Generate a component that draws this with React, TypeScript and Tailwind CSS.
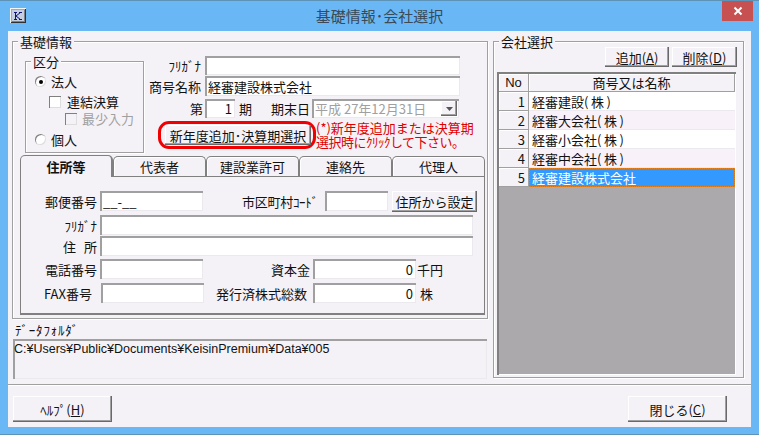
import React from 'react';

const jp = "font-['Noto_Sans_CJK_JP','Noto_Sans_CJK_SC',sans-serif]";
const sunken = 'shadow-[inset_2px_2px_0_#a0a0a0,inset_-1px_-1px_0_#ece9ee] bg-white';
const raised = 'bg-[#f5f2f7] shadow-[inset_-1px_-1px_0_#696969,inset_-2px_-2px_0_#a0a0a0,inset_1px_1px_0_#ffffff]';
const cell = 'bg-[#f5f2f7] border-r border-b border-[#a0a0a0] shadow-[inset_1px_1px_0_#ffffff]';

const Field: React.FC<{ className?: string; text?: string; right?: boolean }> = ({ className = '', text, right }) => (
  <div
    className={`${sunken} ${className} flex items-center overflow-hidden px-[3px] text-[13px] leading-none whitespace-nowrap ${right ? 'justify-end' : ''}`}
  >
    {text}
  </div>
);

const Button: React.FC<{ className?: string; children: React.ReactNode }> = ({ className = '', children }) => (
  <button className={`${raised} ${className} flex items-center justify-center text-[13px] leading-none whitespace-nowrap`}>
    {children}
  </button>
);

const Group: React.FC<{ title: string; className?: string; children: React.ReactNode }> = ({ title, className = '', children }) => (
  <div className={`relative border border-[#a0a0a0] shadow-[inset_1px_1px_0_#ffffff,1px_1px_0_#ffffff] ${className}`}>
    <span className="absolute -top-[8px] left-[5px] bg-[#f5f2f7] px-[2px] text-[13px] leading-[15px]">{title}</span>
    {children}
  </div>
);

const Radio: React.FC<{ on?: boolean }> = ({ on }) => (
  <span className="flex h-[11px] w-[11px] items-center justify-center rounded-full bg-white shadow-[inset_1px_1px_0_#808080,inset_-1px_-1px_0_#dddddd]">
    {on && <span className="h-[4px] w-[4px] rounded-full bg-black" />}
  </span>
);

const Check: React.FC<{ muted?: boolean }> = ({ muted }) => (
  <span className={`block h-[12px] w-[12px] shadow-[inset_1px_1px_0_#808080,inset_-1px_-1px_0_#dddddd] ${muted ? 'bg-[#f5f2f7]' : 'bg-white'}`} />
);

const Label: React.FC<{ className?: string; children: React.ReactNode }> = ({ className = '', children }) => (
  <span className={`shrink-0 text-right text-[13px] leading-none whitespace-nowrap ${className}`}>{children}</span>
);

const tabs = ['住所等', '代表者', '建設業許可', '連絡先', '代理人'];

const companies = ['経審建設', '経審大会社', '経審小会社', '経審中会社', '経審建設株式会社'];

export default function App() {
  return (
    <div className={`${jp} flex h-[435px] w-[759px] flex-col overflow-hidden bg-[#69b8f5] text-[#111] shadow-[inset_0_1px_0_#5e93b8,inset_0_-1px_0_#5e93b8]`}>
      {/* Title bar */}
      <div className="relative flex h-[31px] shrink-0 items-center justify-center">
        <div className="absolute left-[10px] top-[8px] flex h-[15px] w-[16px] items-center justify-center bg-[#c4cfe2] shadow-[inset_1px_1px_0_#f4f4f4,inset_-1px_-1px_0_#303030,inset_2px_2px_0_#a8a8a8,inset_-2px_-2px_0_#808080]">
          <svg width="8" height="8" viewBox="0 0 8 8">
            <path d="M0 .5h3M1.5 .5v7M0 7.5h3M5 .5h3M6.5 .5L2 4l4.5 3.5M5 7.5h3" stroke="#12127a" strokeWidth="1" fill="none" />
          </svg>
        </div>
        <span className="text-[15px] leading-none text-[#3b4a55]">基礎情報･会社選択</span>
        <div className="absolute right-[6px] top-[1px] flex h-[20px] w-[31px] items-center justify-center bg-[#c75050]">
          <svg width="10" height="10" viewBox="0 0 10 10">
            <path d="M1.5 1.5l7 7M8.5 1.5l-7 7" stroke="#fff" strokeWidth="2" />
          </svg>
        </div>
      </div>

      {/* Client area */}
      <div className="mx-[8px] flex h-[396px] flex-col bg-[#f5f2f7] pt-[10px]">
        <div className="flex gap-[5px] pl-[4px]">
          <div className="w-[476px]">
            <Group title="基礎情報" className="h-[278px] w-[476px]">
              <div className="flex h-[113px]">
                {/* 区分 */}
                <Group title="区分" className="ml-[12px] mt-[19px] h-[92px] w-[119px]">
                  <div className="flex items-center gap-[5px] pl-[9px] pt-[13px] text-[13px] leading-none">
                    <Radio on />
                    法人
                  </div>
                  <div className="flex items-center gap-[6px] pl-[23px] pt-[7px] text-[13px] leading-none">
                    <Check />
                    連結決算
                  </div>
                  <div className="flex items-center gap-[5px] pl-[39px] pt-[4px] text-[13px] leading-none text-[#a0a0a0]">
                    <Check muted />
                    最少入力
                  </div>
                  <div className="flex items-center gap-[5px] pl-[9px] pt-[8px] text-[13px] leading-none">
                    <Radio />
                    個人
                  </div>
                </Group>

                <div className="flex flex-col pt-[14px]">
                  <div className="flex h-[19px] items-center gap-[2px]">
                    <Label className="w-[59px] pr-[2px]">ﾌﾘｶﾞﾅ</Label>
                    <Field className="h-[19px] w-[255px]" />
                  </div>
                  <div className="mt-[1px] flex h-[20px] items-center gap-[2px]">
                    <Label className="w-[59px] pr-[2px]">商号名称</Label>
                    <Field className="h-[20px] w-[255px]" text="経審建設株式会社" />
                  </div>
                  <div className="mt-[3px] flex h-[19px] items-center">
                    <Label className="w-[59px]">第</Label>
                    <Field className="ml-[2px] h-[19px] w-[30px]" text="1" right />
                    <Label className="ml-[4px]">期</Label>
                    <Label className="ml-[19px]">期末日</Label>
                    <div className={`${sunken} ml-[2px] flex h-[19px] w-[147px] items-center justify-between pl-[3px] pr-[2px] text-[13px] leading-none text-[#a0a0a0]`}>
                      平成 27年12月31日
                      <span className={`${raised} flex h-[15px] w-[16px] items-center justify-center`}>
                        <svg width="7" height="4" viewBox="0 0 7 4">
                          <path d="M0 0h7L3.5 4z" fill="#555" />
                        </svg>
                      </span>
                    </div>
                  </div>
                  <div className="mt-[3px] flex items-center">
                    <div className="ml-[14px] rounded-[11px] border-[3px] border-[#f00000] py-[1px] pl-[4px] pr-[2px]">
                      <Button className="h-[20px] w-[146px]">新年度追加･決算期選択</Button>
                    </div>
                    <p className="text-[13px] leading-[14px] whitespace-nowrap text-[#e00000]">
                      (*)新年度追加または決算期
                      <br />
                      <span className="tracking-[-0.5px]">選択時にｸﾘｯｸして下さい。</span>
                    </p>
                  </div>
                </div>
              </div>

              {/* Tabs */}
              <div className="ml-[7px] flex h-[21px] w-[465px] items-end">
                {tabs.map((tab, i) => (
                  <div
                    key={tab}
                    className={`flex w-[93px] items-center justify-center rounded-t-[5px] border-l border-t border-[#808080] bg-[#f5f2f7] text-[13px] leading-none ${
                      i === 0
                        ? 'z-10 -mb-px h-[22px] border-r-[2px] font-bold'
                        : 'h-[20px] border-r shadow-[inset_1px_1px_0_#ffffff]'
                    }`}
                  >
                    {tab}
                  </div>
                ))}
              </div>
              <div className="ml-[7px] h-[139px] w-[465px] border border-b-[2px] border-[#808080] pt-[14px]">
                <div className="flex h-[20px] items-center">
                  <Label className="w-[76px]">郵便番号</Label>
                  <Field className="ml-[3px] h-[20px] w-[103px]" text="__-__" />
                  <Label className="w-[122px] pr-[7px] tracking-[-0.3px]">市区町村ｺｰﾄﾞ</Label>
                  <Field className="h-[20px] w-[63px]" />
                  <Button className="ml-[4px] h-[21px] w-[85px]">住所から設定</Button>
                </div>
                <div className="mt-[4px] flex h-[20px] items-center">
                  <Label className="w-[76px]">ﾌﾘｶﾞﾅ</Label>
                  <Field className="ml-[3px] h-[20px] w-[373px]" />
                </div>
                <div className="mt-[1px] flex h-[20px] items-center">
                  <Label className="w-[76px]">
                    <span className="mr-[8px]">住</span>所
                  </Label>
                  <Field className="ml-[3px] h-[20px] w-[373px]" />
                </div>
                <div className="mt-[3px] flex h-[20px] items-center">
                  <Label className="w-[76px]">電話番号</Label>
                  <Field className="ml-[3px] h-[20px] w-[103px]" />
                  <Label className="w-[107px]">資本金</Label>
                  <Field className="ml-[3px] h-[20px] w-[103px]" text="0" right />
                  <Label className="ml-[1px]">千円</Label>
                </div>
                <div className="mt-[4px] flex h-[20px] items-center">
                  <Label className="w-[71px]">FAX番号</Label>
                  <Field className="ml-[9px] h-[20px] w-[103px]" />
                  <Label className="w-[103px]">発行済株式総数</Label>
                  <Field className="ml-[6px] h-[20px] w-[103px]" text="0" right />
                  <Label className="ml-[4px]">株</Label>
                </div>
              </div>
            </Group>

            <div className="mt-[3px] pl-[3px] text-[13px] leading-[15px] tracking-[0.8px]">ﾃﾞｰﾀﾌｫﾙﾀﾞ</div>
            <div className={`${sunken} ml-[1px] mt-[2px] h-[40px] w-[474px] !bg-[#f5f2f7] pl-[1px] pt-[3px] font-['Liberation_Sans',sans-serif] text-[12.5px] leading-[14px]`}>
              C:¥Users¥Public¥Documents¥KeisinPremium¥Data¥005
            </div>
          </div>

          {/* 会社選択 */}
          <Group title="会社選択" className="h-[337px] w-[251px]">
            <div className="flex justify-end gap-[3px] pr-[6px] pt-[5px]">
              <Button className="h-[20px] w-[64px]">
                追加(<u>A</u>)
              </Button>
              <Button className="h-[20px] w-[65px]">
                削除(<u>D</u>)
              </Button>
            </div>
            <div className="ml-[3px] mt-[5px] flex h-[303px] w-[239px] flex-col bg-[#aba9ab] p-[1px] pl-[2px] pt-[2px] shadow-[inset_2px_2px_0_#808080,inset_-1px_-1px_0_#ffffff]">
              <div className="flex h-[18px] shrink-0 text-[13px] leading-none">
                <div className={`${cell} flex w-[30px] items-center justify-center font-['Liberation_Sans',sans-serif]`}>No</div>
                <div className={`${cell} flex flex-1 items-center justify-center`}>商号又は名称</div>
              </div>
              {companies.map((name, i) => (
                <div key={name} className="flex h-[19px] shrink-0 text-[13px] leading-none">
                  <div className={`${cell} flex w-[30px] items-center justify-end pr-[3px]`}>{i + 1}</div>
                  <div
                    className={`flex flex-1 items-center ${
                      i === 4
                        ? 'border border-dotted border-[#e8801a] bg-[#3399ff] pl-[2px] text-white'
                        : i % 2
                          ? 'border-b border-[#ece9ee] bg-[#f9f1f9] pl-[3px]'
                          : 'border-b border-[#ece9ee] bg-white pl-[3px]'
                    }`}
                  >
                    {name}
                    {i < 4 && <span className="tracking-[2.6px]">(株)</span>}
                  </div>
                </div>
              ))}
            </div>
          </Group>
        </div>

        <div className="mt-[5px] h-[2px] shrink-0 border-b border-t border-b-white border-t-[#a0a0a0]" />

        <div className="flex justify-between pl-[5px] pr-[24px] pt-[10px]">
          <Button className="h-[26px] w-[99px]">
            ﾍﾙﾌﾟ(<u>H</u>)
          </Button>
          <Button className="h-[26px] w-[99px]">
            閉じる(<u>C</u>)
          </Button>
        </div>
      </div>
    </div>
  );
}
